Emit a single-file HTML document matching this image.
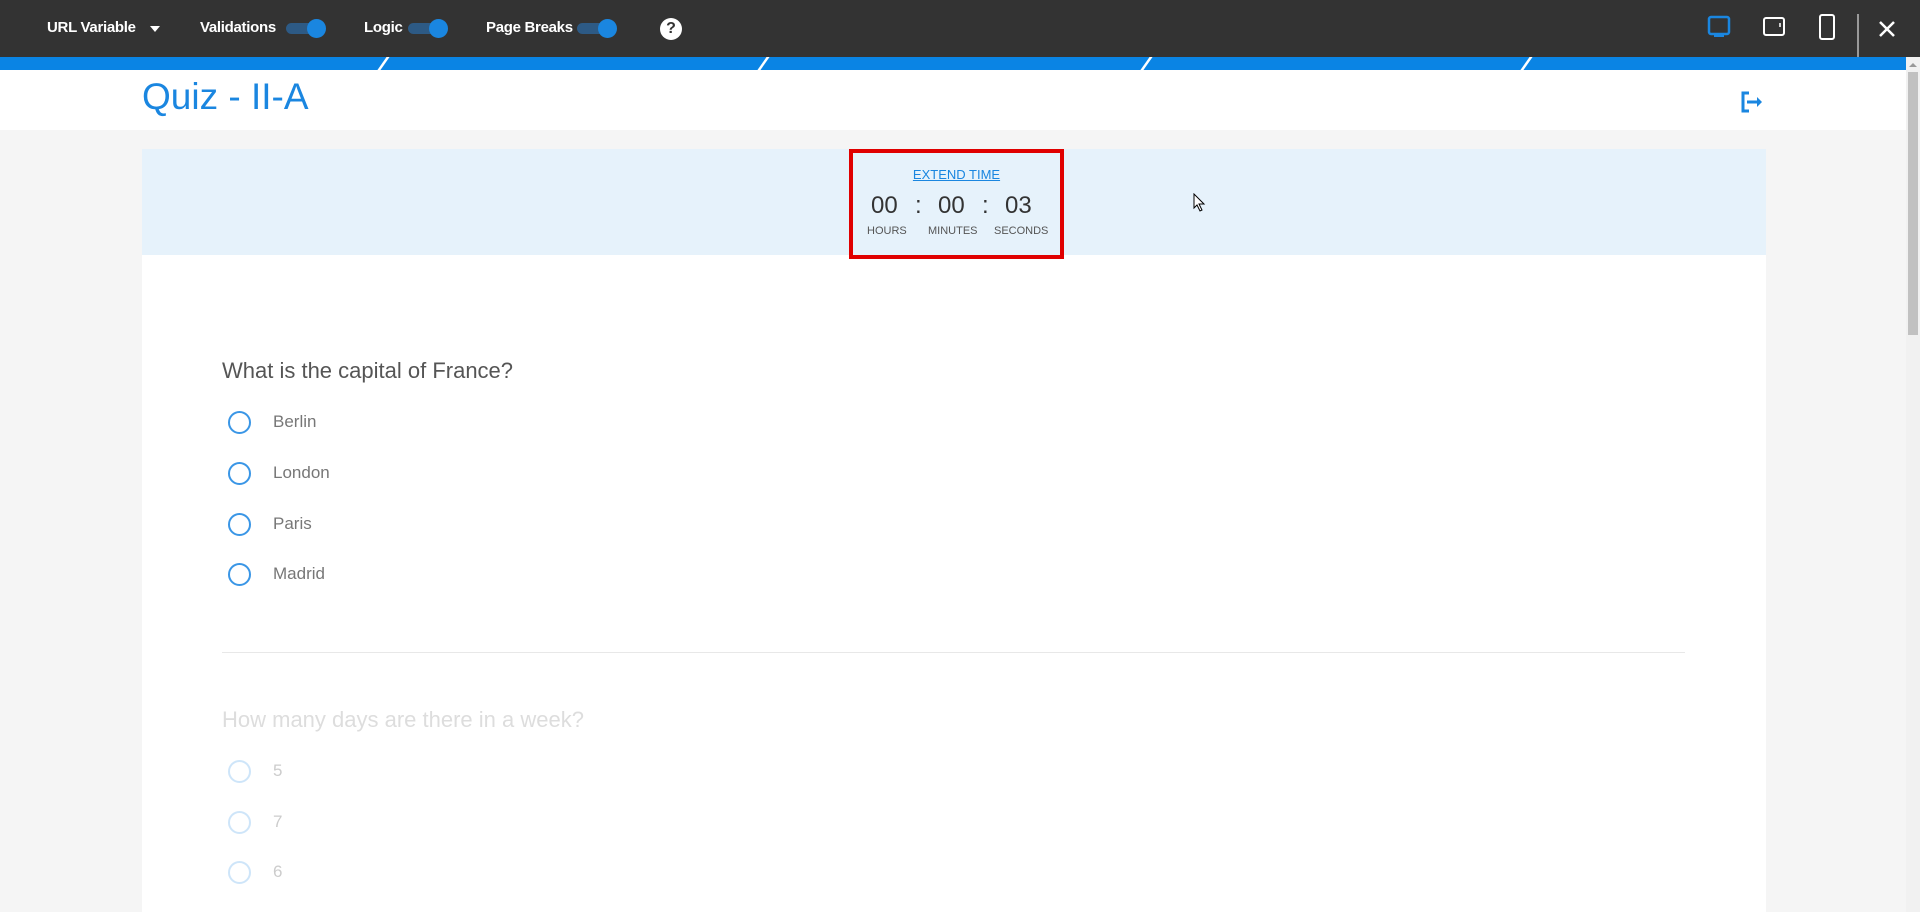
<!DOCTYPE html>
<html><head><meta charset="utf-8"><style>
*{box-sizing:border-box;margin:0;padding:0}
body{width:1920px;height:912px;overflow:hidden;background:#f5f5f5;font-family:"Liberation Sans",sans-serif;position:relative}
.top{position:absolute;left:0;top:0;width:1920px;height:57px;background:#333}
.t{position:absolute;color:#fff;font-size:15px;font-weight:bold;top:19px;letter-spacing:-0.3px}
.tg{position:absolute;top:19px;width:40px;height:18px}
.tg i{position:absolute;left:0;top:4px;width:36px;height:11px;border-radius:6px;background:#2d5a85}
.tg b{position:absolute;right:0;top:0;width:19px;height:19px;border-radius:50%;background:#1a86e0}
.stripe{position:absolute;left:0;top:57px;width:1906px;height:13px;background:#0a84e4}
.stripe s{position:absolute;top:0;width:3px;height:13px;background:#fff;transform:skewX(-35deg)}
.hdr{position:absolute;left:0;top:70px;width:1906px;height:60px;background:#fff}
.title{position:absolute;left:142px;top:76px;font-size:37px;color:#1a86e0}
.card{position:absolute;left:142px;top:149px;width:1624px;height:763px;background:#fff}
.band{position:absolute;left:0;top:0;width:1624px;height:106px;background:#e6f2fb}
.box{position:absolute;left:849px;top:149px;width:215px;height:110px;border:4px solid #e00000}
.q{position:absolute;left:222px;font-size:22px;color:#555}
.r{position:absolute;left:228px;width:23px;height:23px;border:2px solid #3a96e6;border-radius:50%}
.l{position:absolute;left:273px;font-size:17px;color:#777}
.sb{position:absolute;left:1906px;top:57px;width:14px;height:855px;background:#f1f1f1}
</style></head><body>
<div class="top">
<div class="t" style="left:47px">URL Variable</div>
<div style="position:absolute;left:150px;top:26px;border:5px solid transparent;border-top:6px solid #fff"></div>
<div class="t" style="left:200px">Validations</div>
<div class="tg" style="left:286px"><i></i><b></b></div>
<div class="t" style="left:364px">Logic</div>
<div class="tg" style="left:408px"><i></i><b></b></div>
<div class="t" style="left:486px">Page Breaks</div>
<div class="tg" style="left:577px"><i></i><b></b></div>
<div style="position:absolute;left:660px;top:18px;width:22px;height:22px;border-radius:50%;background:#fff;color:#333;font-weight:bold;font-size:16px;text-align:center;line-height:22px">?</div>
<svg style="position:absolute;left:1700px;top:14px" width="220" height="43">
<rect x="9" y="3" width="20" height="17" rx="2" fill="none" stroke="#1a86e0" stroke-width="2.5"/><rect x="14" y="20" width="10" height="3" fill="#1a86e0"/>
<rect x="64" y="4" width="20" height="17" rx="2" fill="none" stroke="#fff" stroke-width="2"/><line x1="80" y1="9" x2="80" y2="13" stroke="#fff" stroke-width="1.5"/>
<rect x="120" y="1" width="14" height="24" rx="2" fill="none" stroke="#fff" stroke-width="2"/>
<line x1="158" y1="-14" x2="158" y2="44" stroke="#fff" stroke-width="1"/>
<path d="M180 8 L194 22 M194 8 L180 22" stroke="#fff" stroke-width="2.5"/>
</svg>
</div>
<div class="stripe"><s style="left:382px"></s><s style="left:762px"></s><s style="left:1145px"></s><s style="left:1525px"></s></div>
<div class="hdr"></div>
<div class="title">Quiz - II-A</div>
<svg style="position:absolute;left:1738px;top:90px" width="28" height="24"><path d="M11 3 H5 V21 H11" fill="none" stroke="#1a86e0" stroke-width="3"/><path d="M9 12 H20" stroke="#1a86e0" stroke-width="3"/><path d="M19 7 L24 12 L19 17Z" fill="#1a86e0"/></svg>
<div class="card"><div class="band"></div></div>
<div class="box"></div>
<div style="position:absolute;left:853px;top:167px;width:207px;text-align:center;font-size:13px;color:#1a86e0;text-decoration:underline">EXTEND TIME</div>
<div style="position:absolute;left:853px;top:192px;width:207px;font-size:24px;color:#333">
<span style="position:absolute;left:18px">00</span><span style="position:absolute;left:62px">:</span><span style="position:absolute;left:85px">00</span><span style="position:absolute;left:129px">:</span><span style="position:absolute;left:152px">03</span></div>
<div style="position:absolute;left:853px;top:225px;width:207px;font-size:11px;color:#555">
<span style="position:absolute;left:14px">HOURS</span><span style="position:absolute;left:75px">MINUTES</span><span style="position:absolute;left:141px">SECONDS</span></div>
<div class="q" style="top:358px">What is the capital of France?</div>
<div class="r" style="top:411px"></div><div class="l" style="top:412px">Berlin</div>
<div class="r" style="top:462px"></div><div class="l" style="top:463px">London</div>
<div class="r" style="top:513px"></div><div class="l" style="top:514px">Paris</div>
<div class="r" style="top:563px"></div><div class="l" style="top:564px">Madrid</div>
<div style="position:absolute;left:222px;top:652px;width:1463px;height:1px;background:#e8e8e8"></div>
<div class="q" style="top:707px;color:#ddd">How many days are there in a week?</div>
<div class="r" style="top:760px;opacity:.25"></div><div class="l" style="top:761px;color:#ccc">5</div>
<div class="r" style="top:811px;opacity:.25"></div><div class="l" style="top:812px;color:#ccc">7</div>
<div class="r" style="top:861px;opacity:.25"></div><div class="l" style="top:862px;color:#ccc">6</div>
<svg style="position:absolute;left:1193px;top:193px" width="14" height="20"><path d="M1 1 L1 15 L4 12 L7 18 L9 17 L6 11 L11 11Z" fill="#fff" stroke="#000" stroke-width="1"/></svg>
<div class="sb"><div style="position:absolute;left:3px;top:6px;border:4px solid transparent;border-bottom:4px solid #999;border-top:0"></div><div style="position:absolute;left:2px;top:15px;width:10px;height:263px;background:#c1c1c1"></div></div>
</body></html>
